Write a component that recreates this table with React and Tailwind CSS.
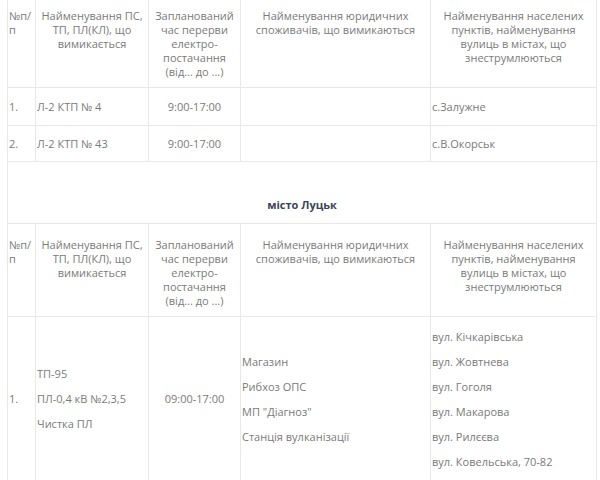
import React from "react";

const cell = "border border-[#e8e8e8] px-[1px]";
const hcell = "border border-[#e8e8e8] px-[1px] align-top pt-[14px] pb-[8px] text-center";

function Header() {
  return (
    <tr>
      <td className={hcell + " !text-left"}>№п/ п</td>
      <td className={hcell}>Найменування ПС, ТП, ПЛ(КЛ), що вимикається</td>
      <td className={hcell}>Запланований час перерви електро-постачання (від... до ...)</td>
      <td className={hcell}>Найменування юридичних споживачів, що вимикаються</td>
      <td className={hcell + " px-[8px]"}>Найменування населених пунктів, найменування вулиць в містах, що знеструмлюються</td>
    </tr>
  );
}

export default function App() {
  const firms = ["Магазин", "Рибхоз ОПС", "МП \"Діагноз\"", "Станція вулканізації"];
  const streets = [
    "вул. Кічкарівська",
    "вул. Жовтнева",
    "вул. Гоголя",
    "вул. Макарова",
    "вул. Рилєєва",
    "вул. Ковельська, 70-82",
  ];
  return (
    <div
      className="w-[600px] h-[480px] overflow-hidden bg-white text-[#7a7a7a] text-[11px] leading-[14px]"
      style={{ fontFamily: '"Open Sans", "Noto Sans", sans-serif' }}
    >
      <table className="-mt-[6px] ml-[7px] w-[589px] border-collapse table-fixed">
        <colgroup>
          <col className="w-[28px]" />
          <col className="w-[113px]" />
          <col className="w-[92px]" />
          <col className="w-[190px]" />
          <col className="w-[166px]" />
        </colgroup>
        <tbody>
          <Header />
          <tr className="h-[38px]">
            <td className={cell}>1.</td>
            <td className={cell}>Л-2 КТП № 4</td>
            <td className={cell + " text-center"}>9:00-17:00</td>
            <td className={cell}></td>
            <td className={cell}>с.Залужне</td>
          </tr>
          <tr className="h-[36px]">
            <td className={cell}>2.</td>
            <td className={cell}>Л-2 КТП № 43</td>
            <td className={cell + " text-center"}>9:00-17:00</td>
            <td className={cell}></td>
            <td className={cell}>с.В.Окорськ</td>
          </tr>
          <tr className="h-[62px]">
            <td colSpan={5} className={cell + " align-bottom pb-[11px] text-center"}>
              <span className="font-bold text-[#3c4459]">місто Луцьк</span>
            </td>
          </tr>
          <Header />
          <tr className="h-[164px]">
            <td className={cell}>1.</td>
            <td className={cell}>
              <div className="leading-[25px]">ТП-95</div>
              <div className="leading-[25px]">ПЛ-0,4 кВ №2,3,5</div>
              <div className="leading-[25px]">Чистка ПЛ</div>
            </td>
            <td className={cell + " text-center"}>09:00-17:00</td>
            <td className={cell}>
              {firms.map((f) => (
                <div key={f} className="leading-[25px]">{f}</div>
              ))}
            </td>
            <td className={cell}>
              {streets.map((s) => (
                <div key={s} className="leading-[25px]">{s}</div>
              ))}
            </td>
          </tr>
        </tbody>
      </table>
    </div>
  );
}
